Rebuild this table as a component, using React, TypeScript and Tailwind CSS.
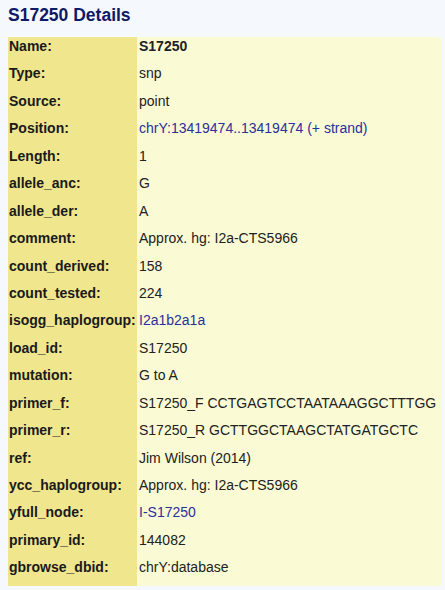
import React from "react";

type Row = { label: string; value: string; link?: boolean; bold?: boolean };

const rows: Row[] = [
  { label: "Name:", value: "S17250", bold: true },
  { label: "Type:", value: "snp" },
  { label: "Source:", value: "point" },
  { label: "Position:", value: "chrY:13419474..13419474 (+ strand)", link: true },
  { label: "Length:", value: "1" },
  { label: "allele_anc:", value: "G" },
  { label: "allele_der:", value: "A" },
  { label: "comment:", value: "Approx. hg: I2a-CTS5966" },
  { label: "count_derived:", value: "158" },
  { label: "count_tested:", value: "224" },
  { label: "isogg_haplogroup:", value: "I2a1b2a1a", link: true },
  { label: "load_id:", value: "S17250" },
  { label: "mutation:", value: "G to A" },
  { label: "primer_f:", value: "S17250_F CCTGAGTCCTAATAAAGGCTTTGG" },
  { label: "primer_r:", value: "S17250_R GCTTGGCTAAGCTATGATGCTC" },
  { label: "ref:", value: "Jim Wilson (2014)" },
  { label: "ycc_haplogroup:", value: "Approx. hg: I2a-CTS5966" },
  { label: "yfull_node:", value: "I-S17250", link: true },
  { label: "primary_id:", value: "144082" },
  { label: "gbrowse_dbid:", value: "chrY:database" },
];

export default function App() {
  return (
    <div
      className="w-[445px] h-[590px] bg-[#f5f8fc] px-[8px] overflow-hidden"
      style={{ fontFamily: '"Liberation Sans", Arial, sans-serif' }}
    >
      <div className="h-[37px] pt-[5px]">
        <h1 className="text-[17.5px] leading-[20px] font-bold text-[#0d1a66]">S17250 Details</h1>
      </div>
      <div className="w-[433px] grid grid-cols-[129px_1fr] bg-[#fafad4]">
        {rows.map((r) => (
          <React.Fragment key={r.label}>
            <div className="h-[27.45px] bg-[#f0e68e] pl-[1px] pt-[1px] text-[14px] leading-[16px] font-bold text-[#1a1a1a] whitespace-nowrap">
              {r.label}
            </div>
            <div
              className={
                "h-[27.45px] pl-[2px] pt-[1px] text-[14px] leading-[16px] whitespace-nowrap " +
                (r.link ? "text-[#2a2f9e]" : "text-[#222222]") +
                (r.bold ? " font-bold" : "")
              }
            >
              {r.value}
            </div>
          </React.Fragment>
        ))}
      </div>
    </div>
  );
}
